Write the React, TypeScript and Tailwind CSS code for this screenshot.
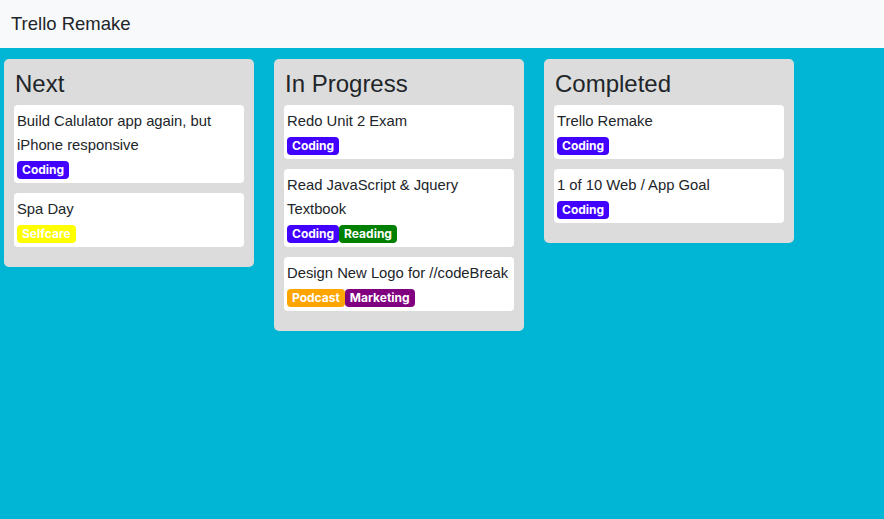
import React from "react";

type Tag = { name: string; color: string };
type Card = { id: number; text: string; tags: Tag[] };

const coding = { name: "Coding", color: "bg-[#4100ff]" };
const reading = { name: "Reading", color: "bg-[#008000]" };
const selfcare = { name: "Selfcare", color: "bg-[#ffff00]" };
const podcast = { name: "Podcast", color: "bg-[#ffa500]" };
const marketing = { name: "Marketing", color: "bg-[#800080]" };

const lists: { title: string; cards: Card[] }[] = [
  {
    title: "Next",
    cards: [
      { id: 1, text: "Build Calulator app again, but iPhone responsive", tags: [coding] },
      { id: 2, text: "Spa Day", tags: [selfcare] }
    ]
  },
  {
    title: "In Progress",
    cards: [
      { id: 3, text: "Redo Unit 2 Exam", tags: [coding] },
      { id: 4, text: "Read JavaScript & Jquery Textbook", tags: [coding, reading] },
      { id: 5, text: "Design New Logo for //codeBreak", tags: [podcast, marketing] }
    ]
  },
  {
    title: "Completed",
    cards: [
      { id: 6, text: "Trello Remake", tags: [coding] },
      { id: 7, text: "1 of 10 Web / App Goal", tags: [coding] }
    ]
  }
];

const App = () => {
  return (
    <div className="min-h-screen flex flex-col bg-[#00b6d4] text-[#212529] font-['Liberation_Sans',Arial,sans-serif]">
      <header className="h-12 flex items-center px-[11px] bg-[#f8f9fa]">
        <span className="text-[18.5px]">Trello Remake</span>
      </header>
      <main className="flex items-start gap-5 pt-[11px] pl-1">
        {lists.map((list) => (
          <section key={list.title} className="w-[250px] bg-[#dcdcdc] rounded-[5px] px-[10px] pt-[10px] pb-5">
            <h2 className="text-2xl leading-[29px] mb-[7px] pl-px">{list.title}</h2>
            <div className="flex flex-col gap-[10px]">
              {list.cards.map((card) => (
                <div key={card.id} className="bg-white rounded-[4px] px-[3px] py-1">
                  <p className="text-[14.8px] leading-6">{card.text}</p>
                  <div className="flex mt-1 font-['Inter',sans-serif]">
                    {card.tags.map((tag) => (
                      <span
                        key={tag.name}
                        className={`${tag.color} text-white text-xs font-bold leading-3 px-[5px] py-[3px] rounded-[4px]`}
                      >
                        {tag.name}
                      </span>
                    ))}
                  </div>
                </div>
              ))}
            </div>
          </section>
        ))}
      </main>
    </div>
  );
};

export default App;
